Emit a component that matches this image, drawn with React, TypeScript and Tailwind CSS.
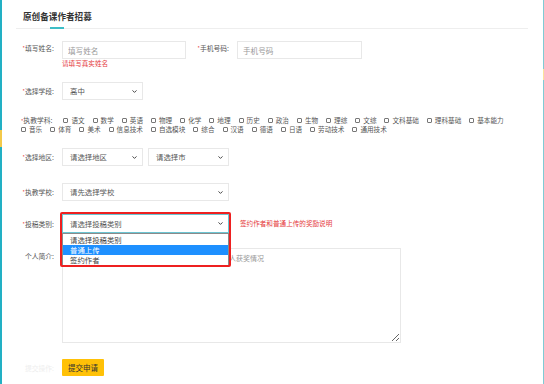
import React from "react";

const FONT = '"Noto Sans CJK SC", "Noto Sans", sans-serif';

function Chevron() {
  return (
    <svg width="5" height="3" viewBox="0 0 5 3" className="shrink-0">
      <path d="M0.5 0.4 L2.5 2.4 L4.5 0.4" fill="none" stroke="#333" strokeWidth="0.9" />
    </svg>
  );
}

function Label({ text, star = true, light = false }: { text: string; star?: boolean; light?: boolean }) {
  return (
    <div
      className={`w-[41px] mr-[8px] shrink-0 text-right text-[6.8px] leading-[14px] whitespace-nowrap ${
        light ? "text-[#eeeeee]" : "text-[#555]"
      }`}
    >
      {star && <span className="text-[#e5393c] text-[5px] align-top">*</span>}
      {text}
    </div>
  );
}

function Select({ text, w, h = "h-[18px]", focused = false }: { text: string; w: string; h?: string; focused?: boolean }) {
  return (
    <div
      className={`${w} ${h} flex items-center justify-between pl-[7px] pr-[5px] bg-white border ${
        focused ? "border-[#6cc5d2]" : "border-[#e8e8e8]"
      } text-[7.4px] text-[#555]`}
    >
      <span>{text}</span>
      <Chevron />
    </div>
  );
}

const line1 = ["语文", "数学", "英语", "物理", "化学", "地理", "历史", "政治", "生物", "理综", "文综", "文科基础", "理科基础", "基本能力"];
const line2 = ["音乐", "体育", "美术", "信息技术", "自选模块", "综合", "汉语", "德语", "日语", "劳动技术", "通用技术"];

function Check({ text }: { text: string }) {
  return (
    <span className="inline-flex items-center mr-[8px] whitespace-nowrap">
      <span className="inline-block w-[5px] h-[5px] border-[0.8px] border-[#777] rounded-[1px] mr-[3px] bg-white" />
      <span>{text}</span>
    </span>
  );
}

export default function App() {
  return (
    <div className="w-[544px] h-[384px] flex bg-white overflow-hidden" style={{ fontFamily: FONT }}>
      {/* left frame bar */}
      <div className="w-[2px] h-full flex flex-col shrink-0">
        <div className="h-[130px] bg-[#22b0c4]" />
        <div className="h-[17px] bg-[#f3c94a]" />
        <div className="flex-1 bg-[#22b0c4]" />
      </div>

      <div className="flex-1 flex flex-col pl-[11px] pt-[10px]">
        {/* title */}
        <div className="ml-[10px] text-[8.6px] leading-[12px] font-bold text-[#333]">原创备课作者招募</div>
        <div className="mt-[6px] ml-[3px] w-[512px] h-px bg-[#eeeeee]">
          <div className="ml-[34px] w-[14px] h-[2px] -mt-px bg-[#3dbdc6]" />
        </div>

        {/* row 1 */}
        <div className="mt-[12px] flex items-start">
          <Label text="填写姓名:" />
          <div className="flex flex-col">
            <input
              readOnly
              placeholder="填写姓名"
              className="w-[124px] h-[18px] border border-[#e8e8e8] pl-[5px] text-[7.6px] outline-none placeholder:text-[#999]"
            />
            <div className="text-[6.6px] leading-[9px] text-[#e5393c]">请填写真实姓名</div>
          </div>
          <div className="ml-[2px]">
            <Label text="手机号码:" />
          </div>
          <input
            readOnly
            placeholder="手机号码"
            className="w-[125px] h-[18px] border border-[#e8e8e8] pl-[5px] text-[7.6px] outline-none placeholder:text-[#999]"
          />
        </div>

        {/* row 2 */}
        <div className="mt-[14px] flex items-center">
          <Label text="选择学段:" />
          <Select text="高中" w="w-[81px]" />
        </div>

        {/* row 3 subjects */}
        <div className="mt-[16px] ml-[8px] w-[507px] text-[6.6px] leading-[9px] text-[#555]">
          <span className="inline-block mr-[11px] text-[6.8px]">
            <span className="text-[#e5393c] text-[5px] align-top">*</span>执教学科:
          </span>
          {line1.map((t) => (
            <Check key={t} text={t} />
          ))}
          {line2.map((t) => (
            <Check key={t} text={t} />
          ))}
        </div>

        {/* row 4 */}
        <div className="mt-[14px] flex items-center">
          <Label text="选择地区:" />
          <Select text="请选择地区" w="w-[81px]" />
          <div className="ml-[5px]">
            <Select text="请选择市" w="w-[81px]" />
          </div>
        </div>

        {/* row 5 */}
        <div className="mt-[17px] flex items-center">
          <Label text="执教学校:" />
          <Select text="请先选择学校" w="w-[167px]" />
        </div>

        {/* row 6 */}
        <div className="mt-[13px] flex items-center relative z-10">
          <Label text="投稿类别:" />
          <div className="relative">
            <Select text="请选择投稿类别" w="w-[167px]" h="h-[19px]" focused />
            <div className="absolute left-0 top-full w-[167px] bg-white border border-[#8a8a8a] text-[7.4px] text-[#444] leading-[10px] py-[1px]">
              <div className="pl-[7px]">请选择投稿类别</div>
              <div className="pl-[7px] bg-[#1e90ff] text-white">普通上传</div>
              <div className="pl-[7px]">签约作者</div>
            </div>
            <div className="absolute -left-[2px] -top-[2px] w-[171px] h-[55px] border-2 border-[#ee2020] rounded-[2px] pointer-events-none" />
          </div>
          <div className="ml-[11px] text-[6.6px] text-[#e5393c]">签约作者和普通上传的奖励说明</div>
        </div>

        {/* row 7 */}
        <div className="mt-[15px] flex items-start">
          <div className="pt-[1px]">
            <Label text="个人简介:" star={false} />
          </div>
          <textarea
            readOnly
            placeholder="请简单介绍您的教学经历、教研成果、论文发表及个人获奖情况"
            className="w-[339px] h-[95px] border border-[#e8e8e8] pl-[5px] pr-[5px] py-[3px] text-[7px] leading-[12px] outline-none placeholder:text-[#999]"
          />
        </div>

        {/* row 8 */}
        <div className="mt-[16px] flex items-center">
          <Label text="提交操作:" star={false} light />
          <div className="w-[42px] h-[17px] flex items-center justify-center bg-[#ffc107] rounded-[1px] text-[7.5px] text-[#333]">
            提交申请
          </div>
        </div>
      </div>

      {/* right frame bar */}
      <div className="w-px h-full flex flex-col shrink-0">
        <div className="h-[69px] bg-[#7fcbd4]" />
        <div className="h-[11px] bg-[#fbe39a]" />
        <div className="flex-1 bg-[#7fcbd4]" />
      </div>
    </div>
  );
}
